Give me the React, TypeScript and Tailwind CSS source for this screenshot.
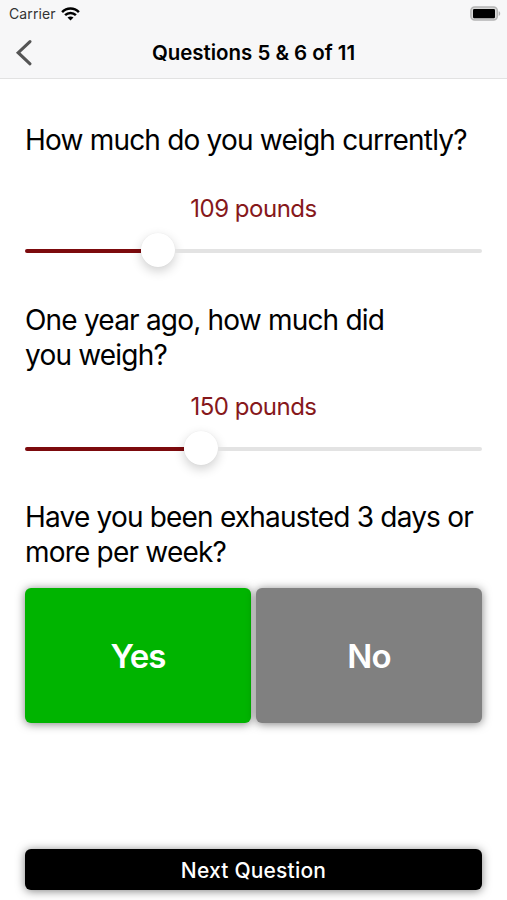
import type { ReactNode } from "react";

function Question({ children, className }: { children: ReactNode; className: string }) {
  return (
    <h2 className={"whitespace-nowrap text-[28px] leading-[35px] tracking-[-0.8px] text-black " + className}>
      {children}
    </h2>
  );
}

function WeightSlider({ pounds, fill }: { pounds: number; fill: string }) {
  return (
    <div>
      <p className="h-[31px] text-center text-[24px] leading-[31px] tracking-[-0.5px] text-[#86181b]">
        {pounds} pounds
      </p>
      <div className="mt-[9px] flex h-[36px] items-center">
        <div className={"h-1 rounded-l-full bg-[#7c0a0d] " + fill} />
        <div className="mb-[2px] size-[34px] shrink-0 rounded-full bg-white shadow-[0_4px_11px_rgba(0,0,0,0.19),0_0_1px_rgba(0,0,0,0.08)]" />
        <div className="h-1 flex-1 rounded-r-full bg-[#e3e3e3]" />
      </div>
    </div>
  );
}

function AnswerButton({ label, color }: { label: string; color: string }) {
  return (
    <button
      className={
        "h-[135px] flex-1 rounded-[6px] pt-[2px] text-[33px] font-semibold tracking-[-0.9px] text-white shadow-[0_1px_10px_rgba(0,0,0,0.5)] " +
        color
      }
    >
      {label}
    </button>
  );
}

function WifiIcon() {
  return (
    <svg width="19" height="14" viewBox="0 0 19 14" fill="none" stroke="#000" strokeWidth="2.5">
      <path d="M1.1 5.1C5.8.3 13.2.3 17.9 5.1" />
      <path d="M4.1 8.2c3-3 7.8-3 10.8 0" />
      <path d="M6.5 10.6c1.7-1.6 4.3-1.6 6 0l-3 3z" fill="#000" stroke="none" />
    </svg>
  );
}

function BatteryIcon() {
  return (
    <svg width="31" height="15" viewBox="0 0 31 15" fill="none">
      <rect x="0.9" y="0.9" width="26.4" height="13.2" rx="3.8" fill="#d8d8d8" stroke="#b4b4b4" strokeWidth="1.5" />
      <rect x="3" y="3" width="22" height="9.2" rx="1.2" fill="#000" />
      <path d="M28.7 5.2c2 .7 2 4 0 4.7z" fill="#b0b0b0" />
    </svg>
  );
}

export default function App() {
  return (
    <main className="flex h-[900px] w-[507px] flex-col overflow-hidden bg-white font-[Inter,sans-serif]">
      <header className="h-[79px] shrink-0 border-b border-[#e2e2e2] bg-[#f7f7f8]">
        <div className="flex h-[27px] items-center justify-between pl-[9px] pr-[6px]">
          <div className="flex items-center gap-[5px]">
            <span className="text-[14px] leading-[27px] tracking-[0.1px] text-[#333]">Carrier</span>
            <WifiIcon />
          </div>
          <BatteryIcon />
        </div>
        <div className="grid h-[51px] grid-cols-[60px_1fr_60px] items-center">
          <button aria-label="Back" className="pl-[15px]">
            <svg width="18" height="28" viewBox="0 0 18 28" fill="none" stroke="#555" strokeWidth="3.1" strokeLinecap="round">
              <path d="M15 2.6 3.2 13.7 15 24.8" />
            </svg>
          </button>
          <h1 className="pt-[2px] text-center text-[20.5px] font-semibold tracking-[-0.03px] text-black">Questions 5 &amp; 6 of 11</h1>
        </div>
      </header>
      <section className="flex flex-1 flex-col px-[25px] pt-[44px] pb-[10px]">
        <Question className="mb-[35px]">How much do you weigh currently?</Question>
        <WeightSlider pounds={109} fill="w-[116px]" />
        <Question className="mt-[34px] mb-[18px]">
          One year ago, how much did
          <br />
          you weigh?
        </Question>
        <WeightSlider pounds={150} fill="w-[159px]" />
        <Question className="mt-[33px] mb-[18px]">
          Have you been exhausted 3 days or
          <br />
          more per week?
        </Question>
        <div className="flex gap-[5px]">
          <AnswerButton label="Yes" color="bg-[#00b400]" />
          <AnswerButton label="No" color="bg-[#808080]" />
        </div>
        <button className="mt-auto h-[41px] rounded-[6px] bg-black pt-[2px] text-[21px] font-medium tracking-[0.2px] text-white shadow-[0_1px_10px_rgba(0,0,0,0.5)]">
          Next Question
        </button>
      </section>
    </main>
  );
}
